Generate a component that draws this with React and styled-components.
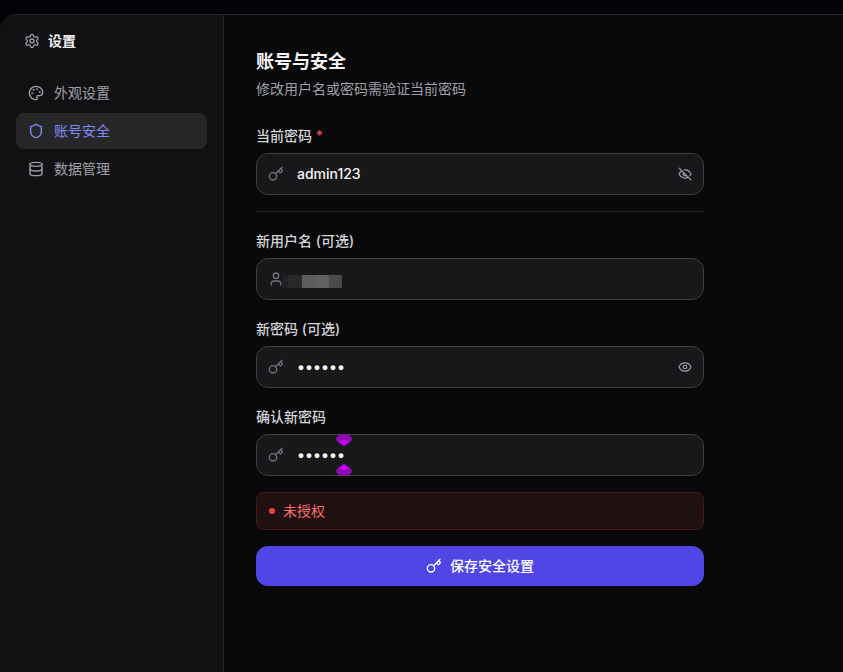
import { useState } from 'react';
import styled, { createGlobalStyle } from 'styled-components';
import {
	Database,
	Eye,
	EyeOff,
	Key,
	Palette,
	Settings,
	Shield,
	User,
} from 'lucide-react';

const GlobalStyle = createGlobalStyle`
	* {
		box-sizing: border-box;
	}

	body {
		margin: 0;
		background: #020307;
		color: #f4f4f5;
		font-family: Inter, 'Noto Sans CJK SC', sans-serif;
		font-size: 14px;
		line-height: 20px;
	}

	button,
	input {
		font: inherit;
	}
`;

const Page = styled.div`
	display: flex;
	min-height: 100vh;
	padding-top: 14px;
`;

const Dialog = styled.div`
	display: flex;
	flex: 1;
	border-top: 1px solid #27272a;
	border-top-left-radius: 16px;
	background: #09090b;
	overflow: hidden;
`;

const Sidebar = styled.aside`
	flex: none;
	width: 224px;
	padding: 16px;
	border-right: 1px solid #27272a;
	background: #111113;
`;

const SidebarTitle = styled.h2`
	display: flex;
	align-items: center;
	gap: 8px;
	margin: 0 0 24px;
	padding: 0 8px;
	font-size: 14px;
	font-weight: 700;

	svg {
		color: #a1a1aa;
	}
`;

const Nav = styled.nav`
	display: flex;
	flex-direction: column;
	gap: 2px;
`;

const NavLink = styled.a`
	display: flex;
	align-items: center;
	gap: 10px;
	padding: 8px 12px;
	border-radius: 8px;
	background: ${ ( props ) => ( props.$active ? '#27272a' : 'transparent' ) };
	color: ${ ( props ) => ( props.$active ? '#818cf8' : '#a1a1aa' ) };
	text-decoration: none;
`;

const Content = styled.main`
	flex: 1;
	min-width: 0;
	padding: 32px;
`;

const Title = styled.h1`
	margin: 0 0 2px;
	font-size: 18px;
	font-weight: 700;
	line-height: 30px;
`;

const Description = styled.p`
	margin: 0 0 24px;
	color: #a1a1aa;
`;

const Form = styled.form`
	display: flex;
	flex-direction: column;
	gap: 16px;
	max-width: 448px;
`;

const FieldWrap = styled.div`
	display: flex;
	flex-direction: column;
	gap: 4px;
`;

const Label = styled.label`
	color: #d4d4d8;
	font-weight: 500;
	line-height: 26px;
`;

const Required = styled.span`
	color: #ef4444;
`;

const InputBox = styled.div`
	position: relative;
	display: flex;
	align-items: center;
	gap: 12px;
	height: 42px;
	padding: 0 11px;
	border: 1px solid #3f3f46;
	border-radius: 12px;
	background: #18181b;

	> svg {
		flex: none;
		color: #71717a;
	}
`;

const Input = styled.input`
	flex: 1;
	min-width: 0;
	padding: 0 1px;
	border: 0;
	outline: 0;
	background: transparent;
	color: #f4f4f5;
	font-weight: 500;

	&[type='password'] {
		font-size: 15px;
	}
`;

const IconButton = styled.button`
	display: flex;
	padding: 0;
	border: 0;
	background: transparent;
	color: #a1a1aa;
	cursor: pointer;
`;

const Mosaic = styled.svg`
	position: absolute;
	left: 25px;
	top: 16px;
`;

const Handles = styled.svg`
	position: absolute;
	left: 79px;
	top: -1px;
`;

const Divider = styled.hr`
	width: 100%;
	height: 1px;
	margin: 0;
	border: 0;
	background: #27272a;
`;

const ErrorBox = styled.div`
	display: flex;
	align-items: center;
	gap: 8px;
	padding: 8px 12px;
	border: 1px solid #4c1719;
	border-radius: 8px;
	background: #201011;
	color: #f87171;
`;

const Dot = styled.span`
	width: 6px;
	height: 6px;
	border-radius: 50%;
	background: #ef4444;
`;

const SubmitButton = styled.button`
	display: flex;
	align-items: center;
	justify-content: center;
	gap: 8px;
	height: 40px;
	border: 0;
	border-radius: 12px;
	background: #4f46e5;
	color: #fff;
	font-weight: 500;
	cursor: pointer;
`;

const navItems = [
	{ id: 'appearance', label: '外观设置', icon: Palette },
	{ id: 'security', label: '账号安全', icon: Shield },
	{ id: 'data', label: '数据管理', icon: Database },
];

const Field = ( props ) => {
	const { id, label, required, icon: Icon, children, toggle, ...rest } = props;
	const { visible: initial = false, ...inputProps } = rest;
	const [ visible, setVisible ] = useState( initial );
	const ToggleIcon = visible ? EyeOff : Eye;

	return (
		<FieldWrap>
			<Label htmlFor={ id }>
				{ label }
				{ required && <Required> *</Required> }
			</Label>
			<InputBox>
				<Icon size={ 16 } />
				<Input
					id={ id }
					type={ visible ? 'text' : 'password' }
					required={ required }
					{ ...inputProps }
				/>
				{ toggle && (
					<IconButton
						type="button"
						aria-label={ visible ? '隐藏密码' : '显示密码' }
						onClick={ () => setVisible( ! visible ) }
					>
						<ToggleIcon size={ 14 } />
					</IconButton>
				) }
				{ children }
			</InputBox>
		</FieldWrap>
	);
};

export default function App() {
	return (
		<Page>
			<GlobalStyle />
			<Dialog>
				<Sidebar>
					<SidebarTitle>
						<Settings size={ 16 } />
						设置
					</SidebarTitle>
					<Nav>
						{ navItems.map( ( { id, label, icon: Icon } ) => (
							<NavLink
								key={ id }
								href={ `#${ id }` }
								$active={ id === 'security' }
							>
								<Icon size={ 16 } />
								{ label }
							</NavLink>
						) ) }
					</Nav>
				</Sidebar>

				<Content>
					<Title>账号与安全</Title>
					<Description>修改用户名或密码需验证当前密码</Description>

					<Form onSubmit={ ( e ) => e.preventDefault() }>
						<Field
							id="current-password"
							label="当前密码"
							icon={ Key }
							defaultValue="admin123"
							required
							visible
							toggle
						/>
						<Divider />
						<Field
							id="username"
							label="新用户名 (可选)"
							icon={ User }
							type="text"
						>
							<Mosaic width="60" height="13" aria-hidden="true">
								<rect width="7" height="13" fill="#202023" />
								<rect x="6" width="14" height="13" fill="#29292b" />
								<rect x="20" width="14" height="13" fill="#5d5d5e" />
								<rect x="34" width="13" height="13" fill="#61615f" />
								<rect x="47" width="13" height="13" fill="#4a4a4c" />
							</Mosaic>
						</Field>
						<Field
							id="new-password"
							label="新密码 (可选)"
							icon={ Key }
							defaultValue="123456"
							toggle
						/>
						<Field
							id="confirm-password"
							label="确认新密码"
							icon={ Key }
							defaultValue="123456"
						>
							<Handles width="16" height="42" aria-hidden="true">
								<path
									d="M3 1Q8 -1 13 1Q16 3 16 5Q16 7 13 9L8 12L3 9Q0 7 0 5Q0 3 3 1ZM3 41Q8 43 13 41Q16 39 16 37Q16 35 13 33L8 30L3 33Q0 35 0 37Q0 39 3 41Z"
									fill="#8b0baf"
								/>
								<path
									d="M3 8Q8 4 13 8L8 12ZM3 34Q8 38 13 34L8 30Z"
									fill="#c800ff"
								/>
							</Handles>
						</Field>
						<ErrorBox role="alert">
							<Dot />
							未授权
						</ErrorBox>
						<SubmitButton type="submit">
							<Key size={ 16 } />
							保存安全设置
						</SubmitButton>
					</Form>
				</Content>
			</Dialog>
		</Page>
	);
}
